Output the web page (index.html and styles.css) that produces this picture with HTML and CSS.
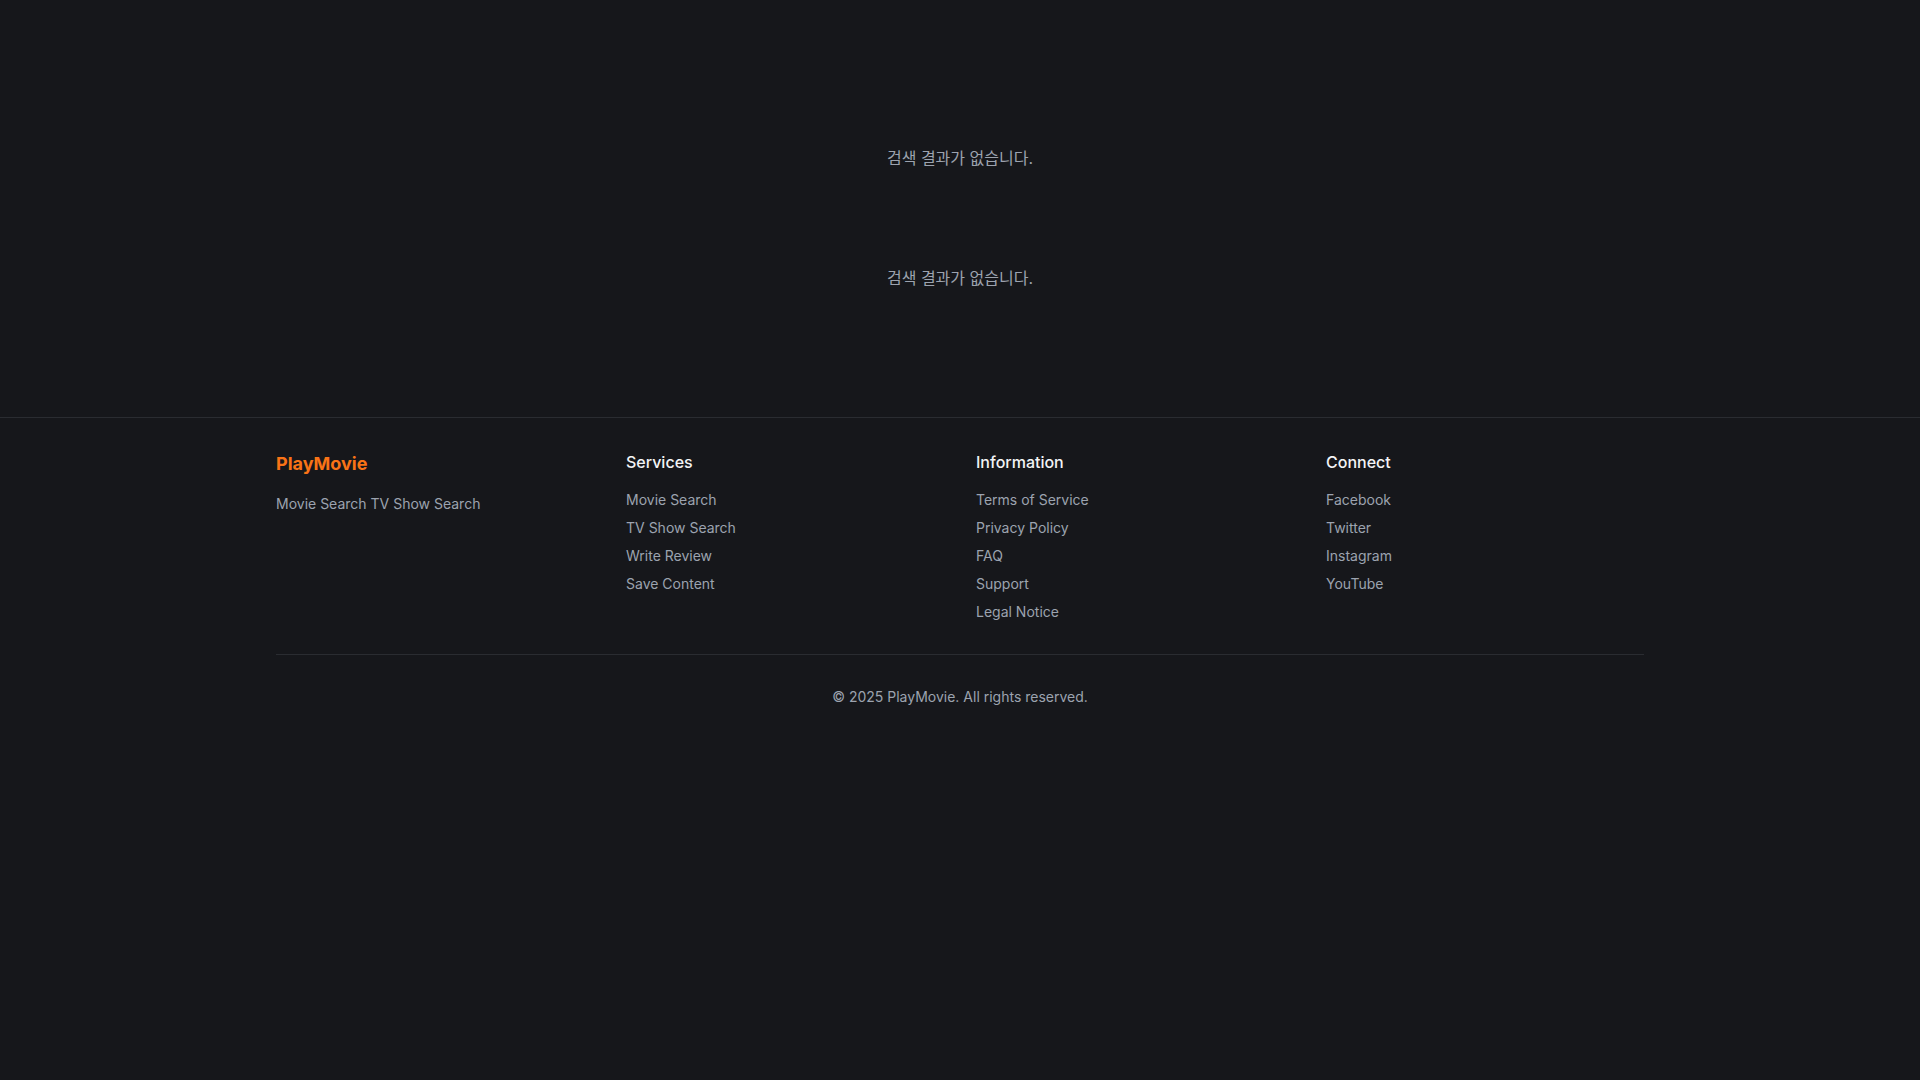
FILE: index.html
```html
<!DOCTYPE html>
<html lang="ko">

<head>
    <meta charset="UTF-8">
    <meta name="viewport" content="width=device-width, initial-scale=1.0">
    <title>PlayMovie</title>
    <link rel="stylesheet" href="styles.css">
</head>

<body>
    <main class="content">
        <section class="result-block">
            <p class="empty">검색 결과가 없습니다.</p>
        </section>
        <section class="result-block">
            <p class="empty">검색 결과가 없습니다.</p>
        </section>
    </main>

    <footer class="footer">
        <div class="container">
            <div class="footer-grid">
                <div class="footer-col">
                    <h2 class="brand">PlayMovie</h2>
                    <p class="brand-desc">Movie Search TV Show Search</p>
                </div>
                <div class="footer-col">
                    <h3 class="col-title">Services</h3>
                    <ul class="links">
                        <li><a href="#">Movie Search</a></li>
                        <li><a href="#">TV Show Search</a></li>
                        <li><a href="#">Write Review</a></li>
                        <li><a href="#">Save Content</a></li>
                    </ul>
                </div>
                <div class="footer-col">
                    <h3 class="col-title">Information</h3>
                    <ul class="links">
                        <li><a href="#">Terms of Service</a></li>
                        <li><a href="#">Privacy Policy</a></li>
                        <li><a href="#">FAQ</a></li>
                        <li><a href="#">Support</a></li>
                        <li><a href="#">Legal Notice</a></li>
                    </ul>
                </div>
                <div class="footer-col">
                    <h3 class="col-title">Connect</h3>
                    <ul class="links">
                        <li><a href="#">Facebook</a></li>
                        <li><a href="#">Twitter</a></li>
                        <li><a href="#">Instagram</a></li>
                        <li><a href="#">YouTube</a></li>
                    </ul>
                </div>
            </div>
            <div class="footer-bottom">
                <p>&copy; 2025 PlayMovie. All rights reserved.</p>
            </div>
        </div>
    </footer>
</body>

</html>
```

FILE: styles.css
```css
* {
    box-sizing: border-box;
}

body {
    font-family: Inter, "Noto Sans CJK KR", sans-serif;
    background-color: #16171b;
    color: #e5e7eb;
    margin: 0;
    padding: 0;
    min-height: 100vh;
}

.content {
    padding: 98px 0 79px;
}

.result-block {
    padding: 48px 0;
}

.empty {
    margin: 0;
    text-align: center;
    font-size: 16px;
    line-height: 24px;
    color: #9ca3af;
}

.footer {
    border-top: 1px solid #2a2c31;
    padding: 32px 0 48px;
}

.container {
    max-width: 1400px;
    margin: 0 auto;
    padding: 0 16px;
}

.footer-grid {
    display: grid;
    grid-template-columns: repeat(4, 1fr);
    gap: 32px;
}

.brand {
    margin: 0 0 16px;
    font-size: 18px;
    line-height: 28px;
    font-weight: 700;
    color: #f97316;
}

.brand-desc {
    margin: 0;
    font-size: 14px;
    line-height: 20px;
    color: #9ca3af;
}

.col-title {
    margin: 0 0 16px;
    font-size: 16px;
    line-height: 24px;
    font-weight: 500;
    color: #f3f4f6;
}

.links {
    list-style: none;
    margin: 0;
    padding: 0;
    display: flex;
    flex-direction: column;
    gap: 8px;
}

.links li {
    font-size: 14px;
    line-height: 20px;
}

.links a {
    color: #9ca3af;
    text-decoration: none;
}

.footer-bottom {
    margin-top: 32px;
    padding-top: 32px;
    border-top: 1px solid #2a2c31;
    text-align: center;
}

.footer-bottom p {
    margin: 0;
    font-size: 14px;
    line-height: 20px;
    color: #9ca3af;
}
```
